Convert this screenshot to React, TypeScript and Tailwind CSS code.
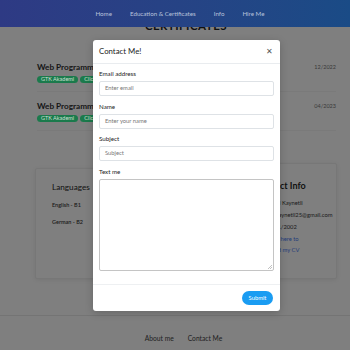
import React from "react";

function Badge({ children }: { children: React.ReactNode }) {
  return (
    <span className="inline-flex h-[7px] items-center rounded-full bg-[#1b7a4c] px-[4px] text-[5.5px] leading-none text-[#cfe0d4]">
      {children}
    </span>
  );
}

function CertItem({ date }: { date: string }) {
  return (
    <div className="border-b border-[#7a7a7a] pb-[8px]">
      <div className="flex h-[12px] items-center justify-between">
        <div className="text-[8.2px] font-bold leading-[12px] text-[#151515]">Web Programming with React</div>
        <div className="text-[5.5px] text-[#3a3a3a]">{date}</div>
      </div>
      <div className="mt-[3px] flex gap-[2px]">
        <Badge>GTK Akademi</Badge>
        <Badge>Click here</Badge>
      </div>
    </div>
  );
}

export default function App() {
  return (
    <div
      className="relative h-[350px] w-[350px] overflow-hidden bg-[#7f7f7f]"
      style={{ fontFamily: "Lato, 'Open Sans', sans-serif" }}
    >
      {/* page content */}
      <div className="flex flex-col">
        <div className="h-[19px]" />
        <div className="h-[14px] pl-[22px] text-center text-[11.5px] font-bold leading-[14px] tracking-[0.5px] text-[#111]">
          CERTIFICATES
        </div>
        <div className="mt-[28px] flex flex-col gap-[8px] pl-[37px] pr-[14px]">
          <CertItem date="12/2022" />
          <CertItem date="04/2023" />
        </div>
        <div className="mt-[32px] flex items-start gap-[20px] pl-[35px] pr-[13px]">
          <div className="mt-[5px] h-[111px] w-[130px] rounded-[2px] border border-[#777] px-[16px] pt-[11px] shadow-[0_1px_4px_rgba(0,0,0,0.08)]">
            <div className="text-[8.2px] leading-[14px] text-[#111]">Languages</div>
            <div className="mt-[7px] text-[5.5px] font-semibold leading-[8px] text-[#1a1a1a]">English - B1</div>
            <div className="mt-[9px] text-[5.5px] font-semibold leading-[8px] text-[#1a1a1a]">German - B2</div>
          </div>
          <div className="h-[116px] flex-1 rounded-[2px] border border-[#777] pl-[70px] pt-[15px] shadow-[0_1px_4px_rgba(0,0,0,0.08)]">
            <div className="whitespace-nowrap text-[9px] font-bold leading-[14px] text-[#111]">Contact Info</div>
            <div className="mt-[4px] whitespace-nowrap text-[5.8px] leading-[12px] text-[#1a1a1a]">Name: Ali Kaynetli</div>
            <div className="whitespace-nowrap text-[5.8px] leading-[12px] text-[#1a1a1a]">Email: akaynetli25@gmail.com</div>
            <div className="whitespace-nowrap text-[5.8px] leading-[12px] text-[#1a1a1a]">Birth: 1/1/2002</div>
            <div className="whitespace-nowrap text-[5.8px] leading-[12px] text-[#1f3c7a]">CV: Click here to</div>
            <div className="whitespace-nowrap text-[5.8px] leading-[10px] text-[#1f3c7a]">download my CV</div>
          </div>
        </div>
        <div className="mt-[36px] border-t border-[#747474]" />
        <div className="flex h-[44px] items-center justify-center gap-[14px] pl-[17px] text-[6.7px] text-[#1e1e1e]">
          <span>About me</span>
          <span>Contact Me</span>
        </div>
      </div>

      {/* navbar */}
      <div className="absolute left-0 top-0 flex h-[27px] w-full items-center justify-center gap-[18px] bg-gradient-to-r from-[#2e3a84] to-[#1a4b86] pl-[10px] text-[6.2px] text-[#b9c3dc]">
        <span>Home</span>
        <span>Education &amp; Certificates</span>
        <span>Info</span>
        <span>Hire Me</span>
      </div>

      {/* modal */}
      <div className="absolute left-[93px] top-[40px] flex h-[271px] w-[187px] flex-col rounded-[3px] bg-white shadow-[0_2px_8px_rgba(0,0,0,0.2)]">
        <div className="flex h-[24px] items-center justify-between border-b border-[#e9ecef] pl-[6px] pr-[7px]">
          <span className="text-[7.8px] text-[#222]">Contact Me!</span>
          <span className="text-[7.5px] leading-none text-[#555]">✕</span>
        </div>
        <div className="flex flex-1 flex-col px-[6px] pt-[5px]">
          {[
            ["Email address", "Enter email"],
            ["Name", "Enter your name"],
            ["Subject", "Subject"],
          ].map(([label, ph]) => (
            <div key={label} className="mb-[5.5px]">
              <div className="h-[10px] text-[6.2px] leading-[10px] text-[#222]">{label}</div>
              <div className="mt-[2px] flex h-[15px] items-center rounded-[2px] border border-[#dee2e6] px-[5px] text-[5.8px] text-[#777]">
                {ph}
              </div>
            </div>
          ))}
          <div className="h-[10px] text-[6.2px] leading-[10px] text-[#222]">Text me</div>
          <div className="relative mt-[2px] h-[92px] rounded-[2px] border border-[#c4c4c4]">
            <svg className="absolute bottom-[1px] right-[1px]" width="4" height="4" viewBox="0 0 4 4">
              <path d="M4 0L0 4M4 2L2 4" stroke="#999" strokeWidth="0.6" />
            </svg>
          </div>
        </div>
        <div className="flex h-[27px] items-center justify-end border-t border-[#eef0f2] pr-[7px]">
          <span className="flex h-[14px] w-[31px] items-center justify-center rounded-full bg-[#1a9cf2] text-[5.8px] text-white">
            Submit
          </span>
        </div>
      </div>
    </div>
  );
}
